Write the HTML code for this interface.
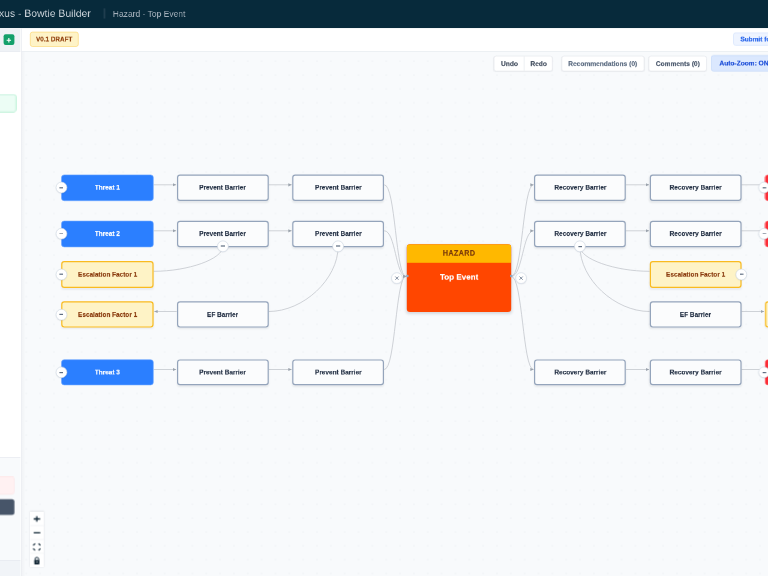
<!DOCTYPE html>
<html><head><meta charset="utf-8">
<style>
*{margin:0;padding:0}
html,body{width:768px;height:576px;overflow:hidden;background:#f8fafc;font-family:"Liberation Sans",sans-serif}
.L [style*="bold"]{-webkit-text-stroke:0.25px currentColor}
.L{position:absolute;left:0;top:0;width:1280px;height:960px;transform:scale(0.6);transform-origin:0 0}
.t{will-change:transform;display:inline-block}
</style></head><body>
<div class="L" id="cv">
<div style="position:absolute;left:35.500px;top:85.833px;width:1244.500px;height:874.167px;background-color:#f8fafc"></div>
<div style="position:absolute;left:35.500px;top:85.833px;width:7.000px;height:874.167px;background:linear-gradient(90deg,rgba(15,23,42,0.03),rgba(15,23,42,0))"></div>
</div>
<svg style="position:absolute;left:0;top:0" width="768" height="576" viewBox="0 0 768 576"><defs><marker id="ar" markerWidth="5" markerHeight="5" refX="3.3" refY="2" orient="auto" markerUnits="userSpaceOnUse"><path d="M0,0.4 L3.4,2 L0,3.6 Z" fill="#9ba3ad"/></marker><pattern id="dots" x="19.33" y="54.18" width="13.845" height="13.845" patternUnits="userSpaceOnUse"><circle cx="6.9225" cy="6.9225" r="0.55" fill="#e2e6eb"/></pattern></defs><rect x="21.3" y="51.5" width="747" height="525" fill="url(#dots)"/><g fill="none" stroke="#c6cad0" stroke-width="0.85"><path d="M153.7,184.8 H176.1" marker-end="url(#ar)"/><path d="M268.7,184.8 H291.59999999999997" marker-end="url(#ar)"/><path d="M626.1,184.8 H649.0" marker-end="url(#ar)"/><path d="M741.5,184.8 H764.7"/><path d="M384.2,184.8 C395.6,184.8 395.6,276.4 406.0,276.4" marker-end="url(#ar)"/><path d="M511.2,276.4 C522.7,276.4 522.7,184.8 533.6,184.8" marker-end="url(#ar)"/><path d="M153.7,230.8 H176.1" marker-end="url(#ar)"/><path d="M268.7,230.8 H291.59999999999997" marker-end="url(#ar)"/><path d="M626.1,230.8 H649.0" marker-end="url(#ar)"/><path d="M741.5,230.8 H764.7"/><path d="M384.2,230.8 C395.6,230.8 395.6,276.4 406.0,276.4" marker-end="url(#ar)"/><path d="M511.2,276.4 C522.7,276.4 522.7,230.8 533.6,230.8" marker-end="url(#ar)"/><path d="M153.7,369.5 H176.1" marker-end="url(#ar)"/><path d="M268.7,369.5 H291.59999999999997" marker-end="url(#ar)"/><path d="M626.1,369.5 H649.0" marker-end="url(#ar)"/><path d="M741.5,369.5 H764.7"/><path d="M384.2,369.5 C395.6,369.5 395.6,276.4 406.0,276.4" marker-end="url(#ar)"/><path d="M511.2,276.4 C522.7,276.4 522.7,369.5 533.6,369.5" marker-end="url(#ar)"/><path d="M176.7,311.5 H154.29999999999998" marker-end="url(#ar)"/><path d="M741.5,311.5 H764.1" marker-end="url(#ar)"/><path d="M222.8,246.6 C222.8,258.95 188.25,271.3 153.7,271.3"/><path d="M338.1,246.6 C338.1,279.05 303.4,311.5 268.7,311.5"/><path d="M580.0,246.6 C580.0,258.95 614.8,271.3 649.6,271.3"/><path d="M580.0,246.6 C580.0,279.05 614.8,311.5 649.6,311.5"/></g></svg>
<div class="L" id="nd">
<div style="position:absolute;left:101.667px;top:290.833px;width:154.500px;height:43.833px;background:#2b7fff;border:1.333px solid #6aa5ff;color:#fff;border-radius:5.000px;box-sizing:border-box;font-weight:bold;font-size:10.750px;display:flex;align-items:center;justify-content:center;white-space:nowrap;"><span class="t" style="position:relative;top:-0.333px">Threat 1</span></div>
<div style="position:absolute;left:101.667px;top:367.500px;width:154.500px;height:44.000px;background:#2b7fff;border:1.333px solid #6aa5ff;color:#fff;border-radius:5.000px;box-sizing:border-box;font-weight:bold;font-size:10.750px;display:flex;align-items:center;justify-content:center;white-space:nowrap;"><span class="t" style="position:relative;top:-0.333px">Threat 2</span></div>
<div style="position:absolute;left:101.667px;top:435.000px;width:154.500px;height:44.500px;background:#fef3c6;border:2.583px solid #f9bb20;color:#8a3b0f;box-shadow:0 1.667px 3.333px rgba(15,23,42,0.06);border-radius:5.000px;box-sizing:border-box;font-weight:bold;font-size:10.750px;display:flex;align-items:center;justify-content:center;white-space:nowrap;"><span class="t" style="position:relative;top:-0.333px">Escalation Factor 1</span></div>
<div style="position:absolute;left:101.667px;top:502.000px;width:154.500px;height:44.333px;background:#fef3c6;border:2.583px solid #f9bb20;color:#8a3b0f;box-shadow:0 1.667px 3.333px rgba(15,23,42,0.06);border-radius:5.000px;box-sizing:border-box;font-weight:bold;font-size:10.750px;display:flex;align-items:center;justify-content:center;white-space:nowrap;"><span class="t" style="position:relative;top:-0.333px">Escalation Factor 1</span></div>
<div style="position:absolute;left:101.667px;top:598.667px;width:154.500px;height:43.833px;background:#2b7fff;border:1.333px solid #6aa5ff;color:#fff;border-radius:5.000px;box-sizing:border-box;font-weight:bold;font-size:10.750px;display:flex;align-items:center;justify-content:center;white-space:nowrap;"><span class="t" style="position:relative;top:-0.333px">Threat 3</span></div>
<div style="position:absolute;left:294.500px;top:290.833px;width:153.333px;height:43.833px;background:#fbfcfd;border:2.333px solid #94a4bb;color:#253246;box-shadow:0 1.667px 3.333px rgba(15,23,42,0.08);border-radius:5.000px;box-sizing:border-box;font-weight:bold;font-size:10.750px;display:flex;align-items:center;justify-content:center;white-space:nowrap;"><span class="t" style="position:relative;top:-0.333px">Prevent Barrier</span></div>
<div style="position:absolute;left:487.000px;top:290.833px;width:153.333px;height:43.833px;background:#fbfcfd;border:2.333px solid #94a4bb;color:#253246;box-shadow:0 1.667px 3.333px rgba(15,23,42,0.08);border-radius:5.000px;box-sizing:border-box;font-weight:bold;font-size:10.750px;display:flex;align-items:center;justify-content:center;white-space:nowrap;"><span class="t" style="position:relative;top:-0.333px">Prevent Barrier</span></div>
<div style="position:absolute;left:294.500px;top:367.500px;width:153.333px;height:44.000px;background:#fbfcfd;border:2.333px solid #94a4bb;color:#253246;box-shadow:0 1.667px 3.333px rgba(15,23,42,0.08);border-radius:5.000px;box-sizing:border-box;font-weight:bold;font-size:10.750px;display:flex;align-items:center;justify-content:center;white-space:nowrap;"><span class="t" style="position:relative;top:-0.333px">Prevent Barrier</span></div>
<div style="position:absolute;left:487.000px;top:367.500px;width:153.333px;height:44.000px;background:#fbfcfd;border:2.333px solid #94a4bb;color:#253246;box-shadow:0 1.667px 3.333px rgba(15,23,42,0.08);border-radius:5.000px;box-sizing:border-box;font-weight:bold;font-size:10.750px;display:flex;align-items:center;justify-content:center;white-space:nowrap;"><span class="t" style="position:relative;top:-0.333px">Prevent Barrier</span></div>
<div style="position:absolute;left:294.500px;top:598.667px;width:153.333px;height:43.833px;background:#fbfcfd;border:2.333px solid #94a4bb;color:#253246;box-shadow:0 1.667px 3.333px rgba(15,23,42,0.08);border-radius:5.000px;box-sizing:border-box;font-weight:bold;font-size:10.750px;display:flex;align-items:center;justify-content:center;white-space:nowrap;"><span class="t" style="position:relative;top:-0.333px">Prevent Barrier</span></div>
<div style="position:absolute;left:487.000px;top:598.667px;width:153.333px;height:43.833px;background:#fbfcfd;border:2.333px solid #94a4bb;color:#253246;box-shadow:0 1.667px 3.333px rgba(15,23,42,0.08);border-radius:5.000px;box-sizing:border-box;font-weight:bold;font-size:10.750px;display:flex;align-items:center;justify-content:center;white-space:nowrap;"><span class="t" style="position:relative;top:-0.333px">Prevent Barrier</span></div>
<div style="position:absolute;left:294.500px;top:502.000px;width:153.333px;height:44.333px;background:#fbfcfd;border:2.333px solid #94a4bb;color:#253246;box-shadow:0 1.667px 3.333px rgba(15,23,42,0.08);border-radius:5.000px;box-sizing:border-box;font-weight:bold;font-size:10.750px;display:flex;align-items:center;justify-content:center;white-space:nowrap;"><span class="t" style="position:relative;top:-0.333px">EF Barrier</span></div>
<div style="position:absolute;left:890.333px;top:290.833px;width:153.167px;height:43.833px;background:#fbfcfd;border:2.333px solid #94a4bb;color:#253246;box-shadow:0 1.667px 3.333px rgba(15,23,42,0.08);border-radius:5.000px;box-sizing:border-box;font-weight:bold;font-size:10.750px;display:flex;align-items:center;justify-content:center;white-space:nowrap;"><span class="t" style="position:relative;top:-0.333px">Recovery Barrier</span></div>
<div style="position:absolute;left:1082.667px;top:290.833px;width:153.167px;height:43.833px;background:#fbfcfd;border:2.333px solid #94a4bb;color:#253246;box-shadow:0 1.667px 3.333px rgba(15,23,42,0.08);border-radius:5.000px;box-sizing:border-box;font-weight:bold;font-size:10.750px;display:flex;align-items:center;justify-content:center;white-space:nowrap;"><span class="t" style="position:relative;top:-0.333px">Recovery Barrier</span></div>
<div style="position:absolute;left:1274.500px;top:290.833px;width:66.667px;height:43.833px;background:#fb2c36;border:1.333px solid #ff5a61;border-radius:5.000px;box-sizing:border-box;font-weight:bold;font-size:10.750px;display:flex;align-items:center;justify-content:center;white-space:nowrap;"></div>
<div style="position:absolute;left:890.333px;top:367.500px;width:153.167px;height:44.000px;background:#fbfcfd;border:2.333px solid #94a4bb;color:#253246;box-shadow:0 1.667px 3.333px rgba(15,23,42,0.08);border-radius:5.000px;box-sizing:border-box;font-weight:bold;font-size:10.750px;display:flex;align-items:center;justify-content:center;white-space:nowrap;"><span class="t" style="position:relative;top:-0.333px">Recovery Barrier</span></div>
<div style="position:absolute;left:1082.667px;top:367.500px;width:153.167px;height:44.000px;background:#fbfcfd;border:2.333px solid #94a4bb;color:#253246;box-shadow:0 1.667px 3.333px rgba(15,23,42,0.08);border-radius:5.000px;box-sizing:border-box;font-weight:bold;font-size:10.750px;display:flex;align-items:center;justify-content:center;white-space:nowrap;"><span class="t" style="position:relative;top:-0.333px">Recovery Barrier</span></div>
<div style="position:absolute;left:1274.500px;top:367.500px;width:66.667px;height:44.000px;background:#fb2c36;border:1.333px solid #ff5a61;border-radius:5.000px;box-sizing:border-box;font-weight:bold;font-size:10.750px;display:flex;align-items:center;justify-content:center;white-space:nowrap;"></div>
<div style="position:absolute;left:890.333px;top:598.667px;width:153.167px;height:43.833px;background:#fbfcfd;border:2.333px solid #94a4bb;color:#253246;box-shadow:0 1.667px 3.333px rgba(15,23,42,0.08);border-radius:5.000px;box-sizing:border-box;font-weight:bold;font-size:10.750px;display:flex;align-items:center;justify-content:center;white-space:nowrap;"><span class="t" style="position:relative;top:-0.333px">Recovery Barrier</span></div>
<div style="position:absolute;left:1082.667px;top:598.667px;width:153.167px;height:43.833px;background:#fbfcfd;border:2.333px solid #94a4bb;color:#253246;box-shadow:0 1.667px 3.333px rgba(15,23,42,0.08);border-radius:5.000px;box-sizing:border-box;font-weight:bold;font-size:10.750px;display:flex;align-items:center;justify-content:center;white-space:nowrap;"><span class="t" style="position:relative;top:-0.333px">Recovery Barrier</span></div>
<div style="position:absolute;left:1274.500px;top:598.667px;width:66.667px;height:43.833px;background:#fb2c36;border:1.333px solid #ff5a61;border-radius:5.000px;box-sizing:border-box;font-weight:bold;font-size:10.750px;display:flex;align-items:center;justify-content:center;white-space:nowrap;"></div>
<div style="position:absolute;left:1082.667px;top:435.000px;width:153.167px;height:44.500px;background:#fef3c6;border:2.583px solid #f9bb20;color:#8a3b0f;box-shadow:0 1.667px 3.333px rgba(15,23,42,0.06);border-radius:5.000px;box-sizing:border-box;font-weight:bold;font-size:10.750px;display:flex;align-items:center;justify-content:center;white-space:nowrap;"><span class="t" style="position:relative;top:-0.333px">Escalation Factor 1</span></div>
<div style="position:absolute;left:1082.667px;top:502.000px;width:153.167px;height:44.333px;background:#fbfcfd;border:2.333px solid #94a4bb;color:#253246;box-shadow:0 1.667px 3.333px rgba(15,23,42,0.08);border-radius:5.000px;box-sizing:border-box;font-weight:bold;font-size:10.750px;display:flex;align-items:center;justify-content:center;white-space:nowrap;"><span class="t" style="position:relative;top:-0.333px">EF Barrier</span></div>
<div style="position:absolute;left:1274.500px;top:502.000px;width:66.667px;height:44.333px;background:#fef3c6;border:2.583px solid #f9bb20;color:#8a3b0f;box-shadow:0 1.667px 3.333px rgba(15,23,42,0.06);border-radius:5.000px;box-sizing:border-box;font-weight:bold;font-size:10.750px;display:flex;align-items:center;justify-content:center;white-space:nowrap;"></div>
<div style="position:absolute;left:678.333px;top:406.500px;width:173.667px;height:113.833px;border-radius:5.333px;overflow:hidden;background:#ff4600;box-shadow:0 2.000px 5.000px rgba(15,23,42,0.14)"><div style="position:absolute;left:0;top:0;width:100%;height:31.833px;background:#ffb800"></div><div style="position:absolute;left:0;top:9.833px;width:100%;text-align:center;line-height:13.333px;font-weight:bold;font-size:12.000px;letter-spacing:0.600px;color:#7b3b0b"><span class="t">HAZARD</span></div><div style="position:absolute;left:0;top:47.833px;width:100%;text-align:center;line-height:16.667px;font-weight:bold;font-size:13.500px;color:#fff"><span class="t">Top Event</span></div></div>
<div style="position:absolute;left:676.500px;top:457.500px;width:4.500px;height:4.000px;border-radius:1.667px;background:#8ea5c2"></div>
<div style="position:absolute;left:849.500px;top:457.500px;width:4.500px;height:4.000px;border-radius:1.667px;background:#8ea5c2"></div>
<div style="position:absolute;left:92.583px;top:303.167px;width:19.167px;height:19.167px;box-sizing:border-box;border-radius:50%;background:#fff;border:1.417px solid #cfd8e4;box-shadow:0 0.833px 2.000px rgba(15,23,42,0.10)"><div style="position:absolute;left:50%;top:50%;width:6.333px;height:1.917px;margin-left:-3.167px;margin-top:-0.917px;background:#5f6e82"></div></div>
<div style="position:absolute;left:92.583px;top:379.917px;width:19.167px;height:19.167px;box-sizing:border-box;border-radius:50%;background:#fff;border:1.417px solid #cfd8e4;box-shadow:0 0.833px 2.000px rgba(15,23,42,0.10)"><div style="position:absolute;left:50%;top:50%;width:6.333px;height:1.917px;margin-left:-3.167px;margin-top:-0.917px;background:#5f6e82"></div></div>
<div style="position:absolute;left:92.583px;top:447.667px;width:19.167px;height:19.167px;box-sizing:border-box;border-radius:50%;background:#fff;border:1.417px solid #cfd8e4;box-shadow:0 0.833px 2.000px rgba(15,23,42,0.10)"><div style="position:absolute;left:50%;top:50%;width:6.333px;height:1.917px;margin-left:-3.167px;margin-top:-0.917px;background:#5f6e82"></div></div>
<div style="position:absolute;left:92.583px;top:514.583px;width:19.167px;height:19.167px;box-sizing:border-box;border-radius:50%;background:#fff;border:1.417px solid #cfd8e4;box-shadow:0 0.833px 2.000px rgba(15,23,42,0.10)"><div style="position:absolute;left:50%;top:50%;width:6.333px;height:1.917px;margin-left:-3.167px;margin-top:-0.917px;background:#5f6e82"></div></div>
<div style="position:absolute;left:92.583px;top:611.000px;width:19.167px;height:19.167px;box-sizing:border-box;border-radius:50%;background:#fff;border:1.417px solid #cfd8e4;box-shadow:0 0.833px 2.000px rgba(15,23,42,0.10)"><div style="position:absolute;left:50%;top:50%;width:6.333px;height:1.917px;margin-left:-3.167px;margin-top:-0.917px;background:#5f6e82"></div></div>
<div style="position:absolute;left:361.750px;top:400.750px;width:19.167px;height:19.167px;box-sizing:border-box;border-radius:50%;background:#fff;border:1.417px solid #cfd8e4;box-shadow:0 0.833px 2.000px rgba(15,23,42,0.10)"><div style="position:absolute;left:50%;top:50%;width:6.333px;height:1.917px;margin-left:-3.167px;margin-top:-0.917px;background:#5f6e82"></div></div>
<div style="position:absolute;left:553.917px;top:400.750px;width:19.167px;height:19.167px;box-sizing:border-box;border-radius:50%;background:#fff;border:1.417px solid #cfd8e4;box-shadow:0 0.833px 2.000px rgba(15,23,42,0.10)"><div style="position:absolute;left:50%;top:50%;width:6.333px;height:1.917px;margin-left:-3.167px;margin-top:-0.917px;background:#5f6e82"></div></div>
<div style="position:absolute;left:957.083px;top:401.083px;width:19.167px;height:19.167px;box-sizing:border-box;border-radius:50%;background:#fff;border:1.417px solid #cfd8e4;box-shadow:0 0.833px 2.000px rgba(15,23,42,0.10)"><div style="position:absolute;left:50%;top:50%;width:6.333px;height:1.917px;margin-left:-3.167px;margin-top:-0.917px;background:#5f6e82"></div></div>
<div style="position:absolute;left:1226.083px;top:447.583px;width:19.167px;height:19.167px;box-sizing:border-box;border-radius:50%;background:#fff;border:1.417px solid #cfd8e4;box-shadow:0 0.833px 2.000px rgba(15,23,42,0.10)"><div style="position:absolute;left:50%;top:50%;width:6.333px;height:1.917px;margin-left:-3.167px;margin-top:-0.917px;background:#5f6e82"></div></div>
<div style="position:absolute;left:1264.250px;top:303.167px;width:19.167px;height:19.167px;box-sizing:border-box;border-radius:50%;background:#fff;border:1.417px solid #cfd8e4;box-shadow:0 0.833px 2.000px rgba(15,23,42,0.10)"><div style="position:absolute;left:50%;top:50%;width:6.333px;height:1.917px;margin-left:-3.167px;margin-top:-0.917px;background:#5f6e82"></div></div>
<div style="position:absolute;left:1264.250px;top:379.917px;width:19.167px;height:19.167px;box-sizing:border-box;border-radius:50%;background:#fff;border:1.417px solid #cfd8e4;box-shadow:0 0.833px 2.000px rgba(15,23,42,0.10)"><div style="position:absolute;left:50%;top:50%;width:6.333px;height:1.917px;margin-left:-3.167px;margin-top:-0.917px;background:#5f6e82"></div></div>
<div style="position:absolute;left:1264.250px;top:611.000px;width:19.167px;height:19.167px;box-sizing:border-box;border-radius:50%;background:#fff;border:1.417px solid #cfd8e4;box-shadow:0 0.833px 2.000px rgba(15,23,42,0.10)"><div style="position:absolute;left:50%;top:50%;width:6.333px;height:1.917px;margin-left:-3.167px;margin-top:-0.917px;background:#5f6e82"></div></div>
<div style="position:absolute;left:652.083px;top:453.750px;width:19.167px;height:19.167px;box-sizing:border-box;border-radius:50%;background:#fff;border:1.417px solid #cfd8e4;box-shadow:0 0.833px 2.000px rgba(15,23,42,0.10)"><svg viewBox="0 0 12 12" style="position:absolute;left:0;top:0;width:100%;height:100%"><path d="M4.1,4.1 L7.9,7.9 M7.9,4.1 L4.1,7.9" stroke="#627187" stroke-width="0.9" fill="none"/></svg></div>
<div style="position:absolute;left:859.083px;top:453.750px;width:19.167px;height:19.167px;box-sizing:border-box;border-radius:50%;background:#fff;border:1.417px solid #cfd8e4;box-shadow:0 0.833px 2.000px rgba(15,23,42,0.10)"><svg viewBox="0 0 12 12" style="position:absolute;left:0;top:0;width:100%;height:100%"><path d="M4.1,4.1 L7.9,7.9 M7.9,4.1 L4.1,7.9" stroke="#627187" stroke-width="0.9" fill="none"/></svg></div>
</div>
<div class="L" id="ch">
<div style="position:absolute;left:0.000px;top:0.000px;width:1280.000px;height:46.500px;background:#072a3b"></div>
<div style="position:absolute;left:-24.333px;top:12.167px;width:357.667px;height:20.000px;font-size:17.333px;line-height:20.000px;color:#cdd5dc;white-space:nowrap"><span class="t">Nexus - Bowtie Builder</span></div>
<div style="position:absolute;left:173.333px;top:14.333px;width:1.500px;height:16.667px;background:#2f4a5a"></div>
<div style="position:absolute;left:188.167px;top:15.667px;width:311.833px;height:15.000px;font-size:14.167px;line-height:15.000px;color:#a3afba;white-space:nowrap"><span class="t">Hazard - Top Event</span></div>
<div style="position:absolute;left:35.000px;top:46.500px;width:1245.000px;height:39.333px;background:#fff;box-sizing:border-box;border-bottom:1.500px solid #e2e6eb"></div>
<div style="position:absolute;left:0.000px;top:46.500px;width:35.500px;height:913.500px;background:#fff;box-sizing:border-box;border-right:1.500px solid #e3e7ed"></div>
<div style="position:absolute;left:0.000px;top:46.500px;width:34.000px;height:39.333px;background:#eff2f6;box-sizing:border-box;border-bottom:1.500px solid #e3e7ed"></div>
<div style="position:absolute;left:6.333px;top:56.667px;width:17.500px;height:18.167px;background:#14a06b;border-radius:3.333px"><svg viewBox="0 0 10.5 10.9" style="position:absolute;left:0;top:0;width:100%;height:100%"><path d="M5.25,3.9 V8.3 M3.05,6.1 H7.45" stroke="#fff" stroke-width="1.1" fill="none"/></svg></div>
<div style="position:absolute;left:0.000px;top:761.667px;width:34.000px;height:198.333px;background:#f8fafc;box-sizing:border-box;border-top:1.500px solid #e3e7ed"></div>
<div style="position:absolute;left:0.000px;top:934.000px;width:34.000px;height:26.000px;background:#f1f4f8;box-sizing:border-box;border-top:1.500px solid #e3e7ed"></div>
<div style="position:absolute;left:-33.333px;top:156.667px;width:60.000px;height:30.000px;background:#ecfdf5;box-sizing:border-box;border:1.833px solid #9fe9c5;border-radius:4.167px"></div>
<div style="position:absolute;left:-33.333px;top:794.333px;width:57.667px;height:29.500px;background:#fff1f2;box-sizing:border-box;border:1.500px solid #fde0e3;border-radius:4.167px"></div>
<div style="position:absolute;left:-33.333px;top:831.667px;width:57.667px;height:26.833px;background:#475569;border-radius:4.167px"></div>
<div style="position:absolute;left:49.667px;top:53.167px;width:81.833px;height:24.500px;background:#fef3c7;box-sizing:border-box;border:1.667px solid #fbd366;border-radius:4.167px;color:#92400e;font-weight:bold;font-size:10.583px;display:flex;align-items:center;justify-content:center;white-space:nowrap"><span class="t">V0.1 DRAFT</span></div>
<div style="position:absolute;left:1222.000px;top:53.500px;width:111.333px;height:22.833px;background:#eef4ff;box-sizing:border-box;border:1.500px solid #d0e0fb;border-radius:4.167px;color:#2563eb;font-weight:bold;font-size:10.833px;line-height:20.000px;padding-left:10.667px;white-space:nowrap"><span class="t">Submit for Review</span></div>
<div style="position:absolute;left:823.000px;top:93.000px;width:98.167px;height:25.667px;background:#fff;box-sizing:border-box;border:1.500px solid #e2e6eb;border-radius:4.167px;box-shadow:0 0.833px 1.667px rgba(15,23,42,0.05);color:#3f4b5c;font-weight:bold;font-size:11.000px;display:flex;align-items:center;justify-content:center;white-space:nowrap;"><span style="position:absolute;left:0;top:0;width:49.500px;height:100%;display:flex;align-items:center;justify-content:center"><span class="t">Undo</span></span><span style="position:absolute;left:48.667px;top:0;width:1.333px;height:100%;background:#e2e6eb"></span><span style="position:absolute;left:49.500px;top:0;width:48.667px;height:100%;display:flex;align-items:center;justify-content:center"><span class="t">Redo</span></span></div>
<div style="position:absolute;left:936.167px;top:93.000px;width:137.500px;height:25.667px;background:#fff;box-sizing:border-box;border:1.500px solid #e2e6eb;border-radius:4.167px;box-shadow:0 0.833px 1.667px rgba(15,23,42,0.05);color:#5b6b80;font-weight:bold;font-size:11.000px;display:flex;align-items:center;justify-content:center;white-space:nowrap;"><span class="t">Recommendations (0)</span></div>
<div style="position:absolute;left:1081.167px;top:93.000px;width:97.333px;height:25.667px;background:#fff;box-sizing:border-box;border:1.500px solid #e2e6eb;border-radius:4.167px;box-shadow:0 0.833px 1.667px rgba(15,23,42,0.05);color:#475569;font-weight:bold;font-size:11.000px;display:flex;align-items:center;justify-content:center;white-space:nowrap;"><span class="t">Comments (0)</span></div>
<div style="position:absolute;left:1185.167px;top:91.833px;width:148.167px;height:27.333px;background:#dbe8fe;box-sizing:border-box;border:1.500px solid #bcd3f8;border-radius:4.167px;color:#1d4ed8;font-weight:bold;font-size:11.000px;line-height:24.333px;padding-left:12.667px;white-space:nowrap"><span class="t">Auto-Zoom: ON</span></div>
<div style="position:absolute;left:49.667px;top:852.667px;width:23.333px;height:92.500px;background:#fff;box-shadow:0 0 3.333px 0.833px rgba(15,23,42,0.10)"><svg viewBox="0 0 14 55.5" style="position:absolute;left:0;top:0;width:100%;height:100%"><path d="M0,13.8 H14 M0,27.7 H14 M0,41.5 H14" stroke="#eceef1" stroke-width="0.6"/><path d="M6.8,4.3 V9.9 M3.7,7.1 H10.1" stroke="#0f2433" stroke-width="1.3" fill="none"/><path d="M3.7,20.9 H10.3" stroke="#0f2433" stroke-width="1.15" fill="none"/><path d="M3.5,33.3 L4.7,32.1 M8.9,32.1 L10.1,33.3 M3.5,37.0 L4.7,38.2 M8.9,38.2 L10.1,37.0" stroke="#0f2433" stroke-width="1.2" fill="none" stroke-linecap="round"/><path d="M5.0,48.4 V47.4 A1.85,1.85 0 0 1 8.7,47.4 V48.4" stroke="#0f2433" stroke-width="1.0" fill="none"/><rect x="4.3" y="48.2" width="5.1" height="4.3" rx="0.6" fill="#0f2433"/><rect x="6.35" y="49.8" width="1.0" height="1.0" fill="#fff"/></svg></div>
</div>
</body></html>
